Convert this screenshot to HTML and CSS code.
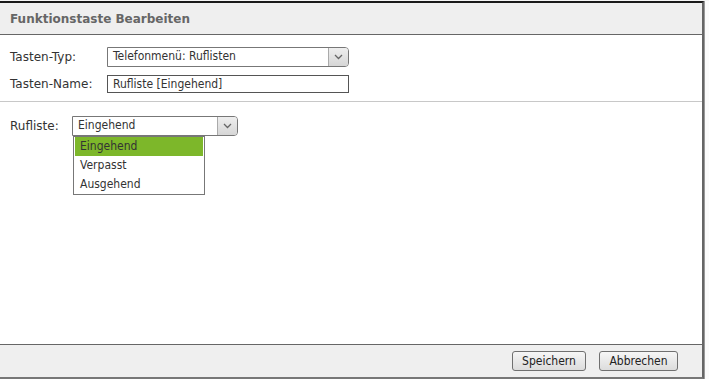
FILE: index.html
```html
<!DOCTYPE html>
<html>
<head>
<meta charset="utf-8">
<link rel="stylesheet" href="styles.css">
</head>
<body>
<div class="page">
  <div class="dialog">
    <div class="header">Funktionstaste Bearbeiten</div>
    <div class="content">
      <div class="section first">
        <div class="row">
          <label class="lbl lbl-wide">Tasten-Typ:</label>
          <div class="select select-wide">
            <span class="select-value">Telefonmenü: Ruflisten</span>
            <span class="select-btn"><svg width="9" height="6" viewBox="0 0 9 6"><path d="M1 1 L4.5 4.5 L8 1" fill="none" stroke="#666" stroke-width="1.3"/></svg></span>
          </div>
        </div>
        <div class="row row2">
          <label class="lbl lbl-wide">Tasten-Name:</label>
          <div class="input">Rufliste [Eingehend]</div>
        </div>
      </div>
      <div class="section second">
        <div class="row">
          <label class="lbl lbl-narrow">Rufliste:</label>
          <div class="select-wrap">
            <div class="select select-small">
              <span class="select-value">Eingehend</span>
              <span class="select-btn"><svg width="9" height="6" viewBox="0 0 9 6"><path d="M1 1 L4.5 4.5 L8 1" fill="none" stroke="#666" stroke-width="1.3"/></svg></span>
            </div>
            <ul class="dropdown">
              <li class="sel">Eingehend</li>
              <li>Verpasst</li>
              <li>Ausgehend</li>
            </ul>
          </div>
        </div>
      </div>
    </div>
    <div class="footer">
      <button class="btn btn-save">Speichern</button>
      <button class="btn btn-cancel">Abbrechen</button>
    </div>
  </div>
  <div class="side"></div>
</div>
</body>
</html>
```
FILE: styles.css
```css
html, body {
  margin: 0;
  padding: 0;
  background: #ffffff;
}
body {
  font-family: "DejaVu Sans", sans-serif;
  font-size: 12px;
  color: #333;
}
.page {
  display: flex;
  height: 379px;
  padding-top: 1px;
  box-sizing: border-box;
  background: #f4f4f4;
}
.dialog {
  width: 705px;
  height: 378px;
  box-sizing: border-box;
  border-top: 2px solid #1a1a1a;
  border-right: 2px solid #666;
  border-bottom: 2px solid #777;
  background: #fff;
  display: flex;
  flex-direction: column;
}
.side {
  width: 4px;
  border-left: 1px solid #999;
  background: #fbfbfb;
}
.header {
  height: 31px;
  flex: none;
  background: #efefef;
  border-bottom: 1px solid #666;
  padding-left: 10px;
  display: flex;
  align-items: center;
  font-weight: bold;
  font-size: 12px;
  color: #666;
}
.content {
  flex: 1;
}
.section.first {
  padding-top: 12px;
  padding-bottom: 8px;
  border-bottom: 1px solid #c8c8c8;
}
.section.second {
  padding-top: 14px;
}
.row {
  display: flex;
  align-items: center;
  padding-left: 10px;
}
.row2 {
  margin-top: 8px;
}
.lbl-wide { width: 97px; }
.lbl-narrow { width: 62px; }
.select, .input, .dropdown, .btn {
  font-family: "DejaVu Sans Condensed", "DejaVu Sans", sans-serif;
  font-stretch: condensed;
  font-size: 12px;
}
.select {
  display: flex;
  height: 20px;
  box-sizing: border-box;
  border: 1px solid #777;
  border-radius: 0 4px 4px 0;
  background: #fff;
}
.select-wide { width: 242px; }
.select-small { width: 166px; }
.select-value {
  flex: 1;
  padding-left: 5px;
  line-height: 17px;
}
.select-btn {
  width: 19px;
  border-left: 1px solid #aaa;
  border-radius: 0 3px 3px 0;
  background: linear-gradient(#eeeeee, #d6d6d6);
  display: flex;
  align-items: center;
  justify-content: center;
}
.input {
  width: 242px;
  height: 18px;
  box-sizing: border-box;
  border: 1px solid #555;
  padding-left: 5px;
  line-height: 16px;
}
.select-wrap {
  position: relative;
}
.dropdown {
  position: absolute;
  left: 1px;
  top: 20px;
  width: 132px;
  margin: 0;
  padding: 0 1px;
  list-style: none;
  box-sizing: border-box;
  border: 1px solid #777;
  background: #fff;
}
.dropdown li {
  height: 19px;
  line-height: 19px;
  padding-left: 5px;
}
.dropdown li.sel {
  background: #7db72a;
}
.footer {
  height: 32px;
  flex: none;
  background: #efefef;
  border-top: 1px solid #666;
  display: flex;
  align-items: center;
  justify-content: flex-end;
  gap: 13px;
  padding-right: 24px;
}
.btn {
  color: #222;
  height: 20px;
  padding: 0;
  border: 1px solid #707070;
  border-radius: 3px;
  background: linear-gradient(#f6f6f6, #dcdcdc);
}
.btn-save { width: 74px; }
.btn-cancel { width: 79px; }
```
